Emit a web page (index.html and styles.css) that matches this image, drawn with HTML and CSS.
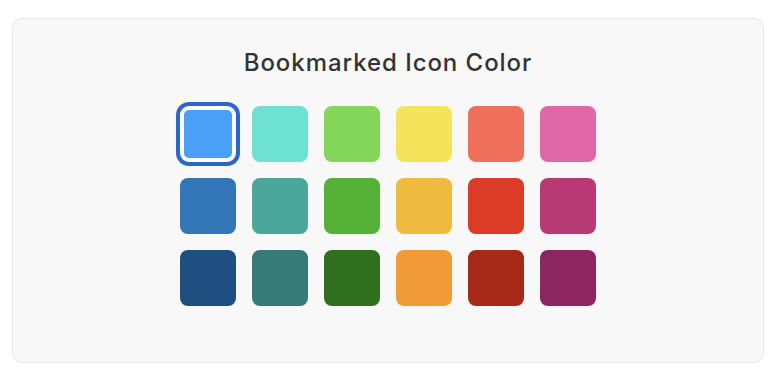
FILE: index.html
```html
<!DOCTYPE html>
<html lang="en">

<head>
    <meta charset="UTF-8">
    <meta name="viewport" content="width=device-width, initial-scale=1.0">
    <title>Bookmarked Icon Color</title>
    <link rel="stylesheet" href="styles.css">
</head>

<body>

    <div class="panel">
        <h2 class="panel-title">Bookmarked Icon Color</h2>

        <div class="swatches">
            <button class="swatch selected" style="background-color: #4a9ff7"></button>
            <button class="swatch" style="background-color: #6ee2d0"></button>
            <button class="swatch" style="background-color: #83d65a"></button>
            <button class="swatch" style="background-color: #f5e45b"></button>
            <button class="swatch" style="background-color: #ef705a"></button>
            <button class="swatch" style="background-color: #e068a6"></button>

            <button class="swatch" style="background-color: #3276b8"></button>
            <button class="swatch" style="background-color: #4ba69c"></button>
            <button class="swatch" style="background-color: #55b038"></button>
            <button class="swatch" style="background-color: #eebb40"></button>
            <button class="swatch" style="background-color: #db3b27"></button>
            <button class="swatch" style="background-color: #b83a75"></button>

            <button class="swatch" style="background-color: #1f4f80"></button>
            <button class="swatch" style="background-color: #367b76"></button>
            <button class="swatch" style="background-color: #306f1e"></button>
            <button class="swatch" style="background-color: #f19a38"></button>
            <button class="swatch" style="background-color: #a72918"></button>
            <button class="swatch" style="background-color: #8d2560"></button>
        </div>
    </div>

</body>

</html>
```

FILE: styles.css
```css
body {
    font-family: Inter, "Noto Sans", sans-serif;
    margin: 0;
    padding: 18px 14px 0 12px;
    background-color: #fff;
}

.panel {
    height: 345px;
    box-sizing: border-box;
    padding-top: 30px;
    background-color: #f8f8f8;
    border: 1px solid #e6e6e6;
    border-radius: 10px;
}

.panel-title {
    margin: 0 0 29px;
    font-size: 24px;
    line-height: 28px;
    font-weight: 500;
    letter-spacing: 0.95px;
    color: #333;
    text-align: center;
}

.swatches {
    display: grid;
    grid-template-columns: repeat(6, 56px);
    gap: 16px;
    justify-content: center;
}

.swatch {
    width: 56px;
    height: 56px;
    padding: 0;
    border: none;
    border-radius: 8px;
    cursor: pointer;
}

.swatch.selected {
    border: 4px solid #fff;
    border-radius: 9px;
    box-shadow: 0 0 0 4px #2b67c7;
}
```
